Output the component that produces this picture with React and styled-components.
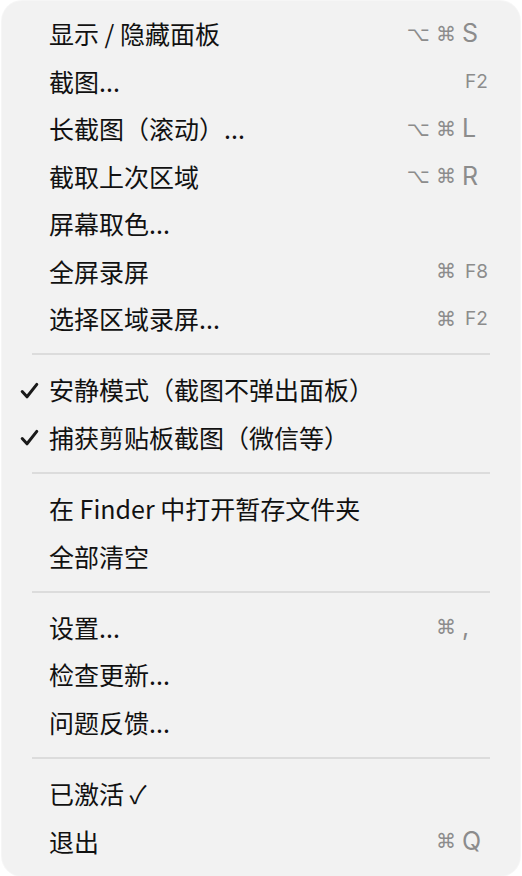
import React from 'react';
import styled, { createGlobalStyle } from 'styled-components';

const GlobalStyle = createGlobalStyle`
  html, body {
    margin: 0;
    padding: 0;
    background: #ffffff;
  }
  body {
    font-family: "Noto Sans CJK SC", "Noto Sans", sans-serif;
  }
`;

const sections = [
  [
    { label: '显示 / 隐藏面板', mods: '⌥ ⌘', keyName: 'S' },
    { label: '截图...', keyName: 'F2', small: true },
    { label: '长截图（滚动）...', mods: '⌥ ⌘', keyName: 'L' },
    { label: '截取上次区域', mods: '⌥ ⌘', keyName: 'R' },
    { label: '屏幕取色...' },
    { label: '全屏录屏', mods: '⌘', keyName: 'F8', small: true },
    { label: '选择区域录屏...', mods: '⌘', keyName: 'F2', small: true },
  ],
  [
    { label: '安静模式（截图不弹出面板）', checked: true },
    { label: '捕获剪贴板截图（微信等）', checked: true },
  ],
  [
    { label: '在 Finder 中打开暂存文件夹' },
    { label: '全部清空' },
  ],
  [
    { label: '设置...', mods: '⌘', keyName: ',' },
    { label: '检查更新...' },
    { label: '问题反馈...' },
  ],
  [
    { label: '已激活 ✓' },
    { label: '退出', mods: '⌘', keyName: 'Q' },
  ],
];

const CheckIcon = () => (
  <svg width="19" height="18" viewBox="0 0 19 18">
    <path
      d="M2.2 9.6 L7 14.8 L16.8 2.4"
      fill="none"
      stroke="#1a1a1a"
      strokeWidth="3"
      strokeLinecap="round"
      strokeLinejoin="round"
    />
  </svg>
);

const App = () => {
  return (
    <>
      <GlobalStyle />
      <Menu>
        {sections.map((items, i) => (
          <React.Fragment key={i}>
            {i > 0 && <Separator />}
            {items.map((item) => (
              <Row key={item.label}>
                <CheckSlot>{item.checked && <CheckIcon />}</CheckSlot>
                <Label>{item.label}</Label>
                <Shortcut>
                  <Mods>{item.mods}</Mods>
                  <Key $small={item.small}>{item.keyName}</Key>
                </Shortcut>
              </Row>
            ))}
          </React.Fragment>
        ))}
      </Menu>
    </>
  );
};

export default App;

const Menu = styled.div`
  width: 518px;
  margin: 1px 0 0 2px;
  padding: 9px 0 11px;
  box-sizing: border-box;
  background: #f2f2f2;
  border-radius: 20px;
  box-shadow: 0 0 0 1px rgba(0, 0, 0, 0.035);
`;

const Row = styled.div`
  display: flex;
  align-items: center;
  height: 47.5px;
  padding: 0 18px 0 18px;
`;

const CheckSlot = styled.div`
  width: 29px;
  flex-shrink: 0;
  display: flex;
  align-items: center;
  padding-top: 2px;
`;

const Label = styled.div`
  flex: 1;
  font-size: 25px;
  font-weight: 400;
  line-height: 1;
  color: #111111;
  white-space: nowrap;
`;

const Shortcut = styled.div`
  display: flex;
  align-items: center;
  gap: 6px;
  color: #8c8c8c;
`;

const Mods = styled.span`
  width: 70px;
  text-align: right;
  font-family: "DejaVu Sans", sans-serif;
  font-size: 20px;
`;

const Key = styled.span`
  width: 40px;
  box-sizing: border-box;
  padding-left: ${(p) => (p.$small ? '3px' : '0')};
  font-family: "Inter", "Noto Sans", sans-serif;
  font-size: ${(p) => (p.$small ? '19px' : '25px')};
  line-height: 1;
`;

const Separator = styled.div`
  height: 23.7px;
  display: flex;
  align-items: center;
  padding: 0 30px;

  &::before {
    content: '';
    flex: 1;
    height: 2px;
    background: #dcdcdc;
  }
`;
